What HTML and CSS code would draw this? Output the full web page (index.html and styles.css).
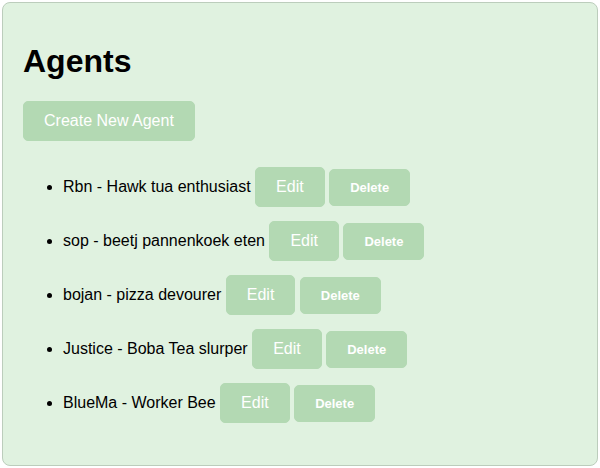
FILE: index.html
```html
<!DOCTYPE html>
<html>
<head>
  <title>Agents</title>
  <link rel="stylesheet" href="styles.css">
</head>
<body>
  <div id="main">
    <h1>Agents</h1>
    <button class="bigButton">Create New Agent</button>

    <ul id="agentList">
      <li>Rbn - Hawk tua enthusiast <button class="bigButton editButton">Edit</button> <button class="deleteButton">Delete</button></li>
      <li>sop - beetj pannenkoek eten <button class="bigButton editButton">Edit</button> <button class="deleteButton">Delete</button></li>
      <li>bojan - pizza devourer <button class="bigButton editButton">Edit</button> <button class="deleteButton">Delete</button></li>
      <li>Justice - Boba Tea slurper <button class="bigButton editButton">Edit</button> <button class="deleteButton">Delete</button></li>
      <li>BlueMa - Worker Bee <button class="bigButton editButton">Edit</button> <button class="deleteButton">Delete</button></li>
    </ul>
  </div>
</body>
</html>
```

FILE: styles.css
```css
body{
  margin: 0;
  background-color: #fff;
  font-family: "Liberation Sans", Arial, sans-serif;
  color: #000;
}

#main{
  margin: 2px;
  min-height: 422px;
  padding: 20px;
  background-color: #e0f2e0;
  border: 1px solid #bccdbc;
  border-radius: 8px;
}

h1{
  font-size: 32px;
  margin: 20px 0 21px;
}

button{
  font-family: "Liberation Sans", Arial, sans-serif;
  background-color: #b3d9b3;
  color: #fff;
  border: 1px solid #b3d9b3;
  border-radius: 5px;
  padding: 10px 20px;
  cursor: pointer;
}

.bigButton{
  font-size: 16px;
}

.deleteButton{
  font-size: 13px;
  font-weight: bold;
}

#agentList{
  margin: 24px 0 16px;
  padding-left: 40px;
  font-size: 16px;
}

#agentList li{
  margin: 10px 0;
}

#agentList button{
  margin: 2px 0;
}
```
